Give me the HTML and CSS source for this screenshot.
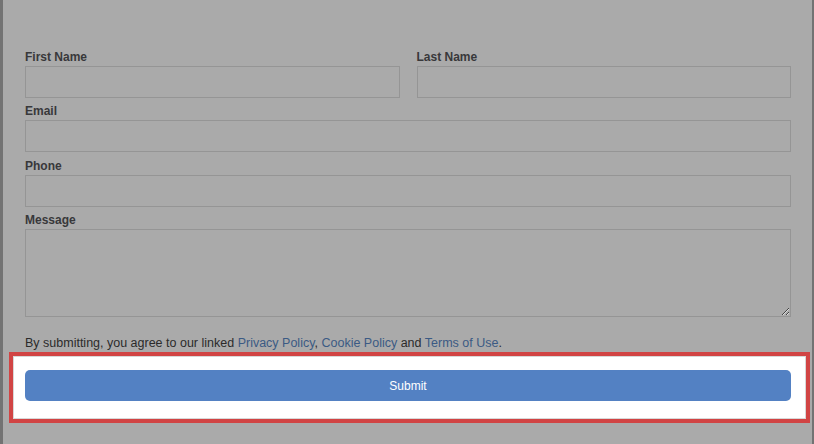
FILE: index.html
```html
<!DOCTYPE html>
<html lang="en">
<head>
    <meta charset="UTF-8">
    <meta name="viewport" content="width=device-width, initial-scale=1.0">
    <title>Contact Form</title>
    <link rel="stylesheet" href="styles.css">
</head>
<body>
    <div class="page">
        <form class="contact-form">
            <div class="row">
                <div class="field">
                    <label for="first">First Name</label>
                    <input type="text" id="first" name="first">
                </div>
                <div class="field">
                    <label for="last">Last Name</label>
                    <input type="text" id="last" name="last">
                </div>
            </div>

            <div class="field">
                <label for="email">Email</label>
                <input type="email" id="email" name="email">
            </div>

            <div class="field">
                <label for="phone">Phone</label>
                <input type="tel" id="phone" name="phone">
            </div>

            <div class="field">
                <label for="message">Message</label>
                <textarea id="message" name="message"></textarea>
            </div>

            <p class="terms">By submitting, you agree to our linked <a href="#">Privacy Policy</a>, <a href="#">Cookie Policy</a> and <a href="#">Terms of Use</a>.</p>

            <div class="highlight">
                <button type="submit" class="submit-btn">Submit</button>
            </div>
        </form>
    </div>
</body>
</html>
```

FILE: styles.css
```css
body {
    background-color: #aaaaaa;
    font-family: "Liberation Sans", Arial, sans-serif;
    margin: 0;
    padding: 0;
}

.page {
    min-height: 444px;
    box-sizing: border-box;
    border-left: 3px solid #737373;
    border-right: 2px solid #737373;
}

.contact-form {
    padding: 50px 21px 0 22px;
}

.row {
    display: grid;
    grid-template-columns: 1fr 1fr;
    gap: 17px;
}

.field {
    margin-bottom: 6.4px;
}

.field label {
    display: block;
    font-size: 12px;
    font-weight: bold;
    line-height: 15px;
    margin-bottom: 1px;
    color: #38383a;
}

.field input,
.field textarea {
    display: block;
    width: 100%;
    box-sizing: border-box;
    height: 32px;
    margin: 0;
    background: #aaaaaa;
    border: 1px solid #959595;
    border-radius: 0;
}

.field textarea {
    height: 88px;
}

/* margin collapses with the field above */
.terms {
    margin: 18px 0 1px;
    font-size: 12.5px;
    line-height: 16px;
    color: #2b2b2b;
}

.terms a {
    color: #3b5a84;
    text-decoration: none;
}

.highlight {
    margin: 0 -19px 0 -16px;
    padding: 14px 15px 18px 12px;
    background: #fff;
    border: 4px solid #d14444;
    box-shadow: inset 0 0 0 1px #d8d8d8;
}

.submit-btn {
    display: block;
    width: 100%;
    height: 31px;
    border: none;
    border-radius: 5px;
    background-color: #5381c3;
    color: #fff;
    font-family: "Liberation Sans", Arial, sans-serif;
    font-size: 12px;
    cursor: pointer;
}
```
